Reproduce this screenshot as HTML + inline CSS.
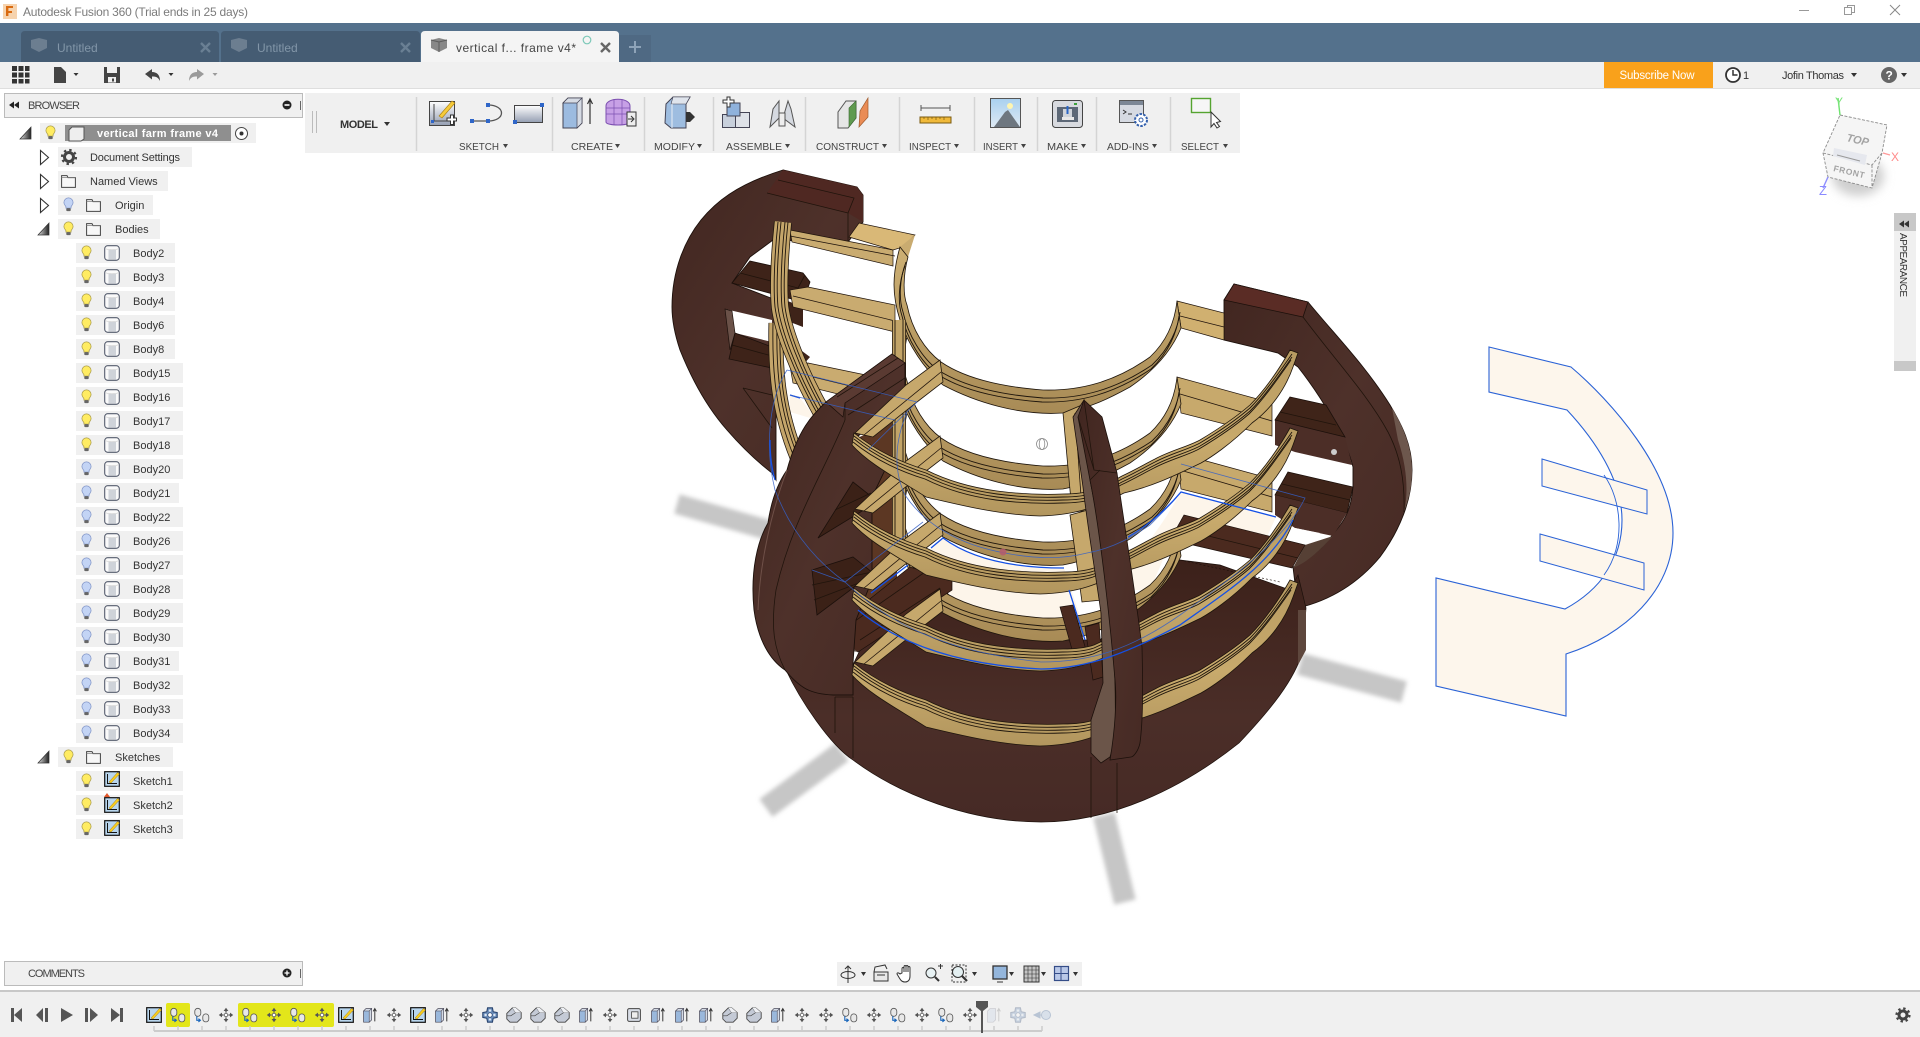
<!DOCTYPE html>
<html><head><meta charset="utf-8"><title>Autodesk Fusion 360</title>
<style>
html,body{margin:0;padding:0;background:#fff;width:1920px;height:1037px;overflow:hidden}
svg{display:block;position:absolute;left:0;top:0}
text{font-family:"Liberation Sans",sans-serif;font-size:11px;fill:#333}
.l{stroke:#20140c;stroke-width:.8;fill:none}
.t{fill:none;stroke:#1e150c;stroke-width:.9}
.bl{fill:none;stroke:#3560c8;stroke-width:.8;opacity:.85}
.bb{fill:none;stroke:#1450e6;stroke-width:1.3}
.rr{fill:#f0f0f0}
.tb{font-size:10.5px;fill:#444}
</style></head><body>
<svg width="1920" height="1037" viewBox="0 0 1920 1037" xmlns="http://www.w3.org/2000/svg">
<defs>
<filter id="blur" x="-20%" y="-20%" width="140%" height="140%"><feGaussianBlur stdDeviation="2"/></filter>
<filter id="blur2" x="-30%" y="-30%" width="160%" height="160%"><feGaussianBlur stdDeviation="5"/></filter>
<linearGradient id="rib" x1="0" y1="0" x2="1" y2="1"><stop offset="0" stop-color="#412620"/><stop offset=".5" stop-color="#4e312a"/><stop offset="1" stop-color="#462a24"/></linearGradient>
<linearGradient id="base" x1="0" y1="0" x2="0" y2="1"><stop offset="0" stop-color="#3c211a"/><stop offset=".6" stop-color="#4b2e28"/><stop offset="1" stop-color="#462a25"/></linearGradient>
<linearGradient id="tan" x1="0" y1="0" x2="0" y2="1"><stop offset="0" stop-color="#cdb074"/><stop offset="1" stop-color="#a88b56"/></linearGradient>
<linearGradient id="tanf" x1="0" y1="0" x2="0" y2="1"><stop offset="0" stop-color="#b89b62"/><stop offset=".55" stop-color="#c8aa6c"/><stop offset="1" stop-color="#b2965e"/></linearGradient>
<linearGradient id="gb" x1="0" y1="0" x2="0" y2="1"><stop offset="0" stop-color="#fff"/><stop offset="1" stop-color="#949eb2"/></linearGradient>
<linearGradient id="tri" x1="0" y1="0" x2="1" y2="0"><stop offset="0" stop-color="#ddd"/><stop offset="1" stop-color="#222"/></linearGradient>
<linearGradient id="sky" x1="0" y1="0" x2="0" y2="1"><stop offset="0" stop-color="#a9d0ef"/><stop offset="1" stop-color="#dfeaf4"/></linearGradient>

<path id="bu" d="M906 262C899 280 899 300 903 312C908 335 922 358 938 370C958 383 990 394 1043 398C1080 399 1115 390 1152 365C1170 348 1178 328 1180 312"/>
<g id="bkb">
<path d="M908 257C903 275 903 295 907 305C912 330 925 350 941 362C960 375 990 386 1043 390C1080 391 1115 382 1150 357C1168 340 1175 320 1177 301L1181 328C1172 350 1155 370 1130 387C1110 398 1090 408 1063 413C1020 416 975 402 943 385C925 370 908 345 900 320C892 295 892 275 900 247Z" fill="url(#tan)" stroke="#1e150c" stroke-width=".8"/>
<use href="#bu" class="t"/><use href="#bu" y="4" x="-1" class="t"/>
</g>
<path id="railL" d="M808 211L895 229V256L793 231L790 214Z" fill="#c9ab70" stroke="#20140c" stroke-width=".7"/>
<g id="rl"><use href="#railL"/><path d="M793 220L895 245" class="l"/></g>
<g id="rr2"><path d="M1177 301L1272 327V360L1181 337Z" fill="#c7a96c" stroke="#20140c" stroke-width=".7"/><path d="M1180 318L1272 345" class="l"/></g>

<path id="fu" d="M854 433C875 450 900 462 926 470C950 482 975 488 997 491C1020 494 1040 495 1063 494C1075 494 1085 493 1094 490C1105 485 1115 480 1122 476C1135 470 1145 464 1155 459C1172 450 1187 447 1200 440C1220 428 1235 418 1250 405C1265 390 1280 368 1292 351"/>
<g id="fb">
<path d="M854 433C875 450 900 462 926 470C950 482 975 488 997 491C1020 494 1040 495 1063 494C1075 494 1085 493 1094 490C1105 485 1115 480 1122 476C1135 470 1145 464 1155 459C1172 450 1187 447 1200 440C1220 428 1235 418 1250 405C1265 390 1280 368 1290 350L1298 353L1293 367C1285 390 1270 410 1252 423C1230 445 1210 458 1201 463C1170 478 1150 487 1124 493C1100 505 1080 515 1040 516C1000 515 960 505 926 497C900 480 870 465 852 445Z" fill="url(#tanf)" stroke="#1e150c" stroke-width=".8"/>
<use href="#fu" y="3" class="t"/><use href="#fu" y="6" class="t"/><use href="#fu" y="9" x="-1" class="t"/>
</g>
<g id="conn"><path d="M855 433L906 385L940 360L943 382L917 402L873 437Z" fill="#c6a86c" stroke="#1e150c" stroke-width=".8"/><path d="M864 435L941 372" class="l"/></g>
<path id="s1" d="M783 222C780 250 778 285 780 307C783 330 798 370 822 413"/>
<path id="s2" d="M776 323C775 370 778 410 797 457"/>

<symbol id="by" viewBox="0 0 12 16"><path d="M6 .8a5 5 0 0 0-5 5c0 2.200 1.400 3 2.200 4.600V12h5.600v-1.600C9.600 8.800 11 8 11 5.800a5 5 0 0 0-5-5z" fill="#ffec62" stroke="#a89a4a" stroke-width=".8"/><rect x="3.600" y="12" width="4.800" height="3.200" rx="1" fill="#666"/></symbol>
<symbol id="bb" viewBox="0 0 12 16"><path d="M6 .8a5 5 0 0 0-5 5c0 2.200 1.400 3 2.200 4.600V12h5.600v-1.600C9.600 8.800 11 8 11 5.800a5 5 0 0 0-5-5z" fill="#c3d4f5" stroke="#7f93c6" stroke-width=".8"/><rect x="3.600" y="12" width="4.800" height="3.200" rx="1" fill="#666"/></symbol>
<symbol id="body" viewBox="0 0 16 16"><rect x=".7" y=".7" width="14.600" height="14.600" rx="3" fill="#fafafa" stroke="#565d6e" stroke-width="1.100"/><path d="M1 3.500c3 1.500 11 1.500 14 0" fill="none" stroke="#c8c8c8" stroke-width=".6"/><rect x="4.500" y="5" width="7.500" height="9.500" fill="#cfd3d9"/></symbol>
<symbol id="fold" viewBox="0 0 15 13"><path d="M.6 12.400V.6h5.400l1 2h7.400v9.800z" fill="#f7f7f7" stroke="#444" stroke-width="1"/><path d="M.6 2.600h13.800" stroke="#777" stroke-width=".7"/></symbol>
<symbol id="sk" viewBox="0 0 16 16"><rect x=".7" y=".7" width="14.600" height="14.600" fill="#b9d6ee" stroke="#111" stroke-width="1.200"/><path d="M3.500 3v9.500H13" fill="none" stroke="#111" stroke-width="1"/><path d="M5 11 13.500 1.500l2 1.500L7 12z" fill="#f8ce20" stroke="#a67c10" stroke-width=".5"/></symbol>
<symbol id="joint" viewBox="0 0 20 20"><rect x="1" y="1" width="7.500" height="10" rx="3.700" fill="#e8e8e8" stroke="#555"/><rect x="11" y="8" width="7.500" height="10" rx="3.700" fill="#e8e8e8" stroke="#555"/><path d="M3.500 11v5h4M5.500 14l2.500 2-2.500 2" fill="none" stroke="#1966bb" stroke-width="1.400"/></symbol>
<symbol id="move" viewBox="0 0 20 20"><g fill="#555"><path d="M10 1l3 4H7zM10 19l-3-4h6zM1 10l4-3v6zM19 10l-4 3V7z"/><path d="M9.200 4h1.600v3H9.200zM9.200 13h1.600v3H9.200zM4 9.200h3v1.600H4zM13 9.200h3v1.600h-3z"/></g><circle cx="10" cy="10" r="2.200" fill="#fff" stroke="#555"/></symbol>
<symbol id="ext" viewBox="0 0 20 20"><path d="M2 5l3-3h7v14l-3 3H2z" fill="#9ab8dc" stroke="#445" stroke-width=".9"/><path d="M5 2h7l-3 3H2zM12 2v14l-3 3V5z" fill="#d3dae5" stroke="#445" stroke-width=".7"/><path d="M16 18V3M14 5.500 16 2l2 3.500" fill="none" stroke="#333" stroke-width="1.200"/></symbol>
<symbol id="extf" viewBox="0 0 20 20" opacity=".35"><path d="M2 5l3-3h7v14l-3 3H2z" fill="#c9d6e6" stroke="#889" stroke-width=".9"/><path d="M16 18V3M14 5.500 16 2l2 3.500" fill="none" stroke="#888" stroke-width="1.200"/></symbol>
<symbol id="pat" viewBox="0 0 20 20"><path d="M7 1h6l1 5 5 1v6l-5 1-1 5H7l-1-5-5-1V7l5-1z" fill="#6f92bf" stroke="#2a456f" stroke-width="1.400"/><circle cx="10" cy="10" r="2.800" fill="#fff" stroke="#2a456f"/><circle cx="10" cy="4.500" r="1.500" fill="#dfe8f2"/><circle cx="10" cy="15.500" r="1.500" fill="#dfe8f2"/><circle cx="4.500" cy="10" r="1.500" fill="#dfe8f2"/><circle cx="15.500" cy="10" r="1.500" fill="#dfe8f2"/></symbol>
<symbol id="cham" viewBox="0 0 20 20"><path d="M1 8 8 1h4l7 6v7l-5 5H5l-4-4z" fill="#c4cad6" stroke="#444" stroke-width="1.100"/><path d="M8 1l4 6 7 0M12 7 6 11H1" fill="none" stroke="#444" stroke-width=".8"/><path d="M8 1h4l7 6h-7z" fill="#eef0f4"/></symbol>
<symbol id="boxi" viewBox="0 0 20 20"><rect x="2" y="2" width="16" height="16" rx="2" fill="#d8dde6" stroke="#444" stroke-width="1.200"/><rect x="7" y="6" width="8" height="8" fill="#eee" stroke="#444"/></symbol>
</defs>

<!-- title bar -->
<rect width="1920" height="23" fill="#fff"/>
<rect x="3" y="4" width="14" height="15" fill="#f6d3ae"/>
<path d="M6 6h7v2H8.400v3H12v2H8.400v3H6z" fill="#d96a10"/>
<text x="23" y="16" style="font-size:12px;fill:#7b7b7b" textLength="225">Autodesk Fusion 360 (Trial ends in 25 days)</text>
<path d="M1799 10.500h10" stroke="#999" stroke-width="1"/>
<rect x="1847.500" y="5.500" width="7" height="7" fill="#fff" stroke="#999"/><rect x="1844.500" y="7.500" width="7" height="7" fill="#fff" stroke="#999"/>
<path d="M1890 5l10 10M1900 5l-10 10" stroke="#888" stroke-width="1"/>

<!-- tab bar -->
<rect y="23" width="1920" height="39" fill="#54718c"/>
<path d="M21 62V35q0-4 4-4h190q4 0 4 4v27z" fill="#455c73"/>
<path d="M221 62V35q0-4 4-4h191q4 0 4 4v27z" fill="#455c73"/>
<path d="M421 62V35q0-4 4-4h190q4 0 4 4v27z" fill="#f4f4f4"/>
<path d="M619 62V35h32v27z" fill="#4f6983"/>
<path d="M31 40l8-2 8 2v8l-8 4-8-4z" fill="#6c7e90"/><path d="M231 40l8-2 8 2v8l-8 4-8-4z" fill="#6c7e90"/>
<path d="M431 40l8-2 8 2v8l-8 4-8-4z" fill="#888"/><path d="M431 40l8 2 8-2M439 42v10" fill="none" stroke="#5c5c5c"/>
<text x="57" y="52" style="font-size:12px;fill:#8296a8">Untitled</text>
<text x="257" y="52" style="font-size:12px;fill:#8296a8">Untitled</text>
<text x="456" y="52" style="font-size:12px;fill:#444" textLength="120">vertical f... frame v4*</text>
<circle cx="587" cy="40" r="3.800" fill="none" stroke="#7cc8b8" stroke-width="1.200"/>
<path d="M201 43l9 9M210 43l-9 9M401 43l9 9M410 43l-9 9" stroke="#6a7f93" stroke-width="2.400"/>
<path d="M601 43l9 9M610 43l-9 9" stroke="#666" stroke-width="2.400"/>
<path d="M635 41v12M629 47h12" stroke="#8ea3b8" stroke-width="2"/>

<!-- quick toolbar -->
<rect y="62" width="1920" height="26" fill="#f0f0f0"/><rect y="88" width="1920" height="1" fill="#dedede"/>
<path d="M12 66h5v5h-5zM18.500 66h5v5h-5zM25 66h4.500v5H25zM12 72.500h5v5h-5zM18.500 72.500h5v5h-5zM25 72.500h4.500v5H25zM12 79h5v4.500h-5zM18.500 79h5v4.500h-5zM25 79h4.500v4.500H25z" fill="#333"/>
<path d="M54 67h7l5 5v11H54z" fill="#444"/><path d="M73.500 73h5l-2.500 3z" fill="#333"/>
<path d="M104 67h16v16h-16z" fill="#444"/><rect x="107" y="67" width="10" height="6" fill="#f0f0f0"/><rect x="108" y="77" width="8" height="5.500" fill="#f0f0f0"/><rect x="112" y="78.500" width="2" height="3" fill="#444"/>
<path d="M145 74l7-5v3c5 0 8 3 8 9-2-4-4-4.500-8-4.500v3z" fill="#444"/><path d="M168.500 73h5l-2.500 3z" fill="#333"/>
<path d="M204 74l-7-5v3c-5 0-8 3-8 9 2-4 4-4.500 8-4.500v3z" fill="#9a9a9a"/><path d="M212.500 73h5l-2.500 3z" fill="#9a9a9a"/>
<rect x="1604" y="62" width="109" height="26" fill="#f9a11b"/>
<text x="1619.500" y="79" style="font-size:11.500px;fill:#fff" textLength="75">Subscribe Now</text>
<circle cx="1733" cy="75" r="7" fill="#fff" stroke="#333" stroke-width="1.800"/><path d="M1733 70v5h4.500" fill="none" stroke="#333" stroke-width="1.500"/>
<text x="1743" y="79" style="font-size:11px">1</text>
<text x="1782" y="79" style="font-size:11px" textLength="62">Jofin Thomas</text><path d="M1851 73h6l-3 4z" fill="#333"/>
<circle cx="1889" cy="75" r="8" fill="#666"/><text x="1885.500" y="79.500" style="font-size:12px;font-weight:700;fill:#fff">?</text><path d="M1901 73h6l-3 4z" fill="#333"/>

<!-- model -->
<g>
<g filter="url(#blur)" stroke="#c6c6c6" fill="none">
<path d="M677 504L775 532" stroke-width="20"/>
<path d="M1300 664L1404 692" stroke-width="22"/>
<path d="M842 752L766 808" stroke-width="22"/>
<path d="M1104 815L1125 902" stroke-width="22"/>
</g>
<!-- sketch profile -->
<path d="M1489 347L1571 367C1610 400 1673 470 1673 533C1673 590 1625 635 1566 654V716L1436 686V578L1565 609C1600 590 1622 560 1622 520C1622 480 1595 440 1567 410L1489 392Z" fill="#fdf6ec" stroke="#2a62d6" stroke-width="1.100"/>
<path d="M1542 459L1647 490V514L1542 486Z" fill="#fdf6ec" stroke="#2a62d6"/>
<path d="M1540 534L1644 563V590L1540 561Z" fill="#fdf6ec" stroke="#2a62d6"/>
<path d="M1604 475C1622 500 1626 545 1604 575" fill="none" stroke="#2a62d6" stroke-width=".9"/>

<!-- back left rib -->
<path d="M783 170L857 187L863 195V222L848 242L773 240L750 257L732 283L776 300V480L772 473C755 460 740 445 727 430C705 405 690 375 680 350C675 335 672 320 672 307C672 270 685 240 701 220C715 203 735 185 783 170Z" fill="url(#rib)" stroke="#1c100b" stroke-width=".9"/>
<path d="M767 193L783 170L857 187L863 195V222L848 213Z" fill="#4f2822"/>
<path d="M767 193L848 213M778 180L854 198L848 213M848 213V242" class="l"/>
<path d="M750 261L803 273L810 282L803 302L732 283Z" fill="#3e2319" stroke="#1c100b" stroke-width=".8"/><path d="M740 273L798 288M798 288L805 275" class="l"/>
<path d="M785 300L803 307V327L790 322Z" fill="#3e2319"/>
<path d="M725 309L772 320V342L735 333L730 338Z" fill="#fff"/>
<path d="M725 309L732 311L735 333L730 350Z" fill="#6a5148" stroke="#1c100b" stroke-width=".7"/>
<path d="M735 333L772 347V368L729 359Z" fill="#3e2319" stroke="#1c100b" stroke-width=".8"/><path d="M732 345L772 356" class="l"/>
<path d="M798 348L810 357L803 365L795 360Z" fill="#3e2319"/>
<path d="M743 388L772 395M743 388L772 428" class="l"/>

<!-- back right rib -->
<path d="M1234 284L1308 302C1335 335 1365 365 1390 405C1402 425 1412 445 1412 470C1412 500 1400 530 1380 557C1365 575 1340 598 1298 608L1293 567C1310 560 1325 545 1334 533C1345 520 1351 510 1353 487V467C1345 435 1320 395 1298 367L1278 353L1224 340V300Z" fill="url(#rib)" stroke="#1c100b" stroke-width=".9"/>
<path d="M1224 300L1234 284L1308 302L1303 317Z" fill="#5a2c25" stroke="#1c100b" stroke-width=".8"/>
<path d="M1303 317C1335 360 1368 395 1388 432C1400 455 1405 480 1404 512" class="l"/>
<path d="M1392 408C1405 430 1412 450 1412 470C1412 490 1408 500 1404 512C1408 495 1408 470 1398 440Z" fill="#6d574d"/>
<path d="M1275 420L1345 437L1352 465L1295 452L1275 445Z" fill="#4c2e27"/>
<path d="M1290 397L1326 405L1345 437L1275 420Z" fill="#3f2419" stroke="#1c100b" stroke-width=".8"/><path d="M1280 412L1336 425" class="l"/>
<path d="M1288 472L1353 487L1347 513L1275 495Z" fill="#3f2419" stroke="#1c100b" stroke-width=".8"/><path d="M1282 484L1350 500" class="l"/>
<path d="M1275 495L1347 513L1333 536L1295 528L1275 515Z" fill="#4c2e27"/>
<path d="M1333 536C1320 550 1308 562 1293 568L1305 545Z" fill="#564035"/>
<circle cx="1334" cy="452" r="3" fill="#ccc"/>

<!-- cream -->
<path d="M790 395L800 398L817 420L790 412Z" fill="#fdf5ea"/><path d="M790 395L800 398" class="bb"/>
<path d="M877 437L893 420L895 437Z" fill="#fdf5ea"/>
<path d="M931 548L943 538C970 558 1010 568 1064 568L1088 640L1060 640C1000 630 960 610 948 590Z" fill="#fdf5ea"/>
<path d="M1100 590C1140 560 1165 520 1181 492L1276 517L1262 548L1210 528L1180 520L1150 590Z" fill="#fdf5ea"/>
<path d="M1295 528L1320 533L1307 543L1295 540Z" fill="#fff"/>

<!-- base -->
<path d="M786 670C800 700 830 745 853 760C900 795 970 822 1041 822C1110 822 1180 790 1239 743C1270 710 1295 680 1303 650L1306 608L1298 575L1290 590L1220 565L1180 560L1150 590L1100 640L1041 640C1000 632 960 612 945 590L860 650L853 665V695L790 672Z" fill="url(#base)" stroke="#1c100b" stroke-width=".7"/>
<path d="M835 697V733M853 697V758M835 697H853M1091 757V818M1117 763V813" class="l"/>
<path d="M1298 610H1306V650L1298 665Z" fill="#5e473d"/>
<path d="M1170 540L1184 515L1305 545L1292 568L1180 542Z" fill="#4b2a1f" stroke="#1c100b" stroke-width=".7"/><path d="M1184 530L1298 558" class="l"/>
<path d="M1180 560L1280 582" stroke="#1c100b" stroke-width=".6" stroke-dasharray="2 2"/>

<!-- brown back wall behind left -->
<path d="M853 440L897 420V600L855 650Z" fill="#5c3723"/>

<!-- back rails & bands -->
<use href="#bkb" y="228"/>
<use href="#rl" y="152"/><use href="#rr2" y="152"/><use href="#bkb" y="152"/>
<use href="#rl" y="76"/><use href="#rr2" y="76"/><use href="#bkb" y="76"/>
<path d="M790 230L893 250V266L792 242Z" fill="#c9ab70" stroke="#20140c" stroke-width=".7"/>
<path d="M849 237L859 223L915 235L903 247L893 250Z" fill="#d9b877" stroke="#20140c" stroke-width=".7"/>
<path d="M790 236L895 256" class="l"/>
<path d="M1177 301L1224 313V340L1181 328Z" fill="#d0b070" stroke="#20140c" stroke-width=".7"/><path d="M1180 316L1224 327" class="l"/>
<path d="M915 235L908 257L900 247Z" fill="#c9ab70"/>
<use href="#bkb"/>

<!-- left strips -->
<use href="#s2" fill="none" stroke="#1e150c" stroke-width="15"/><use href="#s2" fill="none" stroke="#c4a56a" stroke-width="13.500"/>
<use href="#s2" class="t" x="-3"/><use href="#s2" class="t" x="1"/><use href="#s2" class="t" x="4"/>
<use href="#s1" fill="none" stroke="#1e150c" stroke-width="18"/><use href="#s1" fill="none" stroke="#c4a56a" stroke-width="16.500"/>
<use href="#s1" class="t" x="-5"/><use href="#s1" class="t" x="-2"/><use href="#s1" class="t" x="2"/><use href="#s1" class="t" x="5"/>
<path d="M899 320V540" stroke="#1e150c" stroke-width="14"/><path d="M899 320V540" stroke="#c2a468" stroke-width="12.500"/><path d="M895 320V540M903 320V540" class="t"/>

<!-- block -->
<path d="M827 633L910 567L952 580V590L858 652Z" fill="#4b2a1f" stroke="#1c100b" stroke-width=".7"/>
<path d="M845 628L925 572M860 640L940 588" class="l"/>
<path d="M826 628L858 652L845 650Z" fill="#6a5a52"/>

<!-- front-left rib -->
<path d="M892 354L905 363V397L857 437L885 470L872 497L872 580L856 620L853 663V695H833C810 694 800 688 785 670C770 660 758 640 754 610C750 570 758 540 768 523C772 495 780 480 787 470C798 430 812 415 826 402Z" fill="url(#rib)" stroke="#1c100b" stroke-width=".9"/>
<path d="M826 402L892 354L905 363L845 403L843 417Z" fill="#5a3a32" stroke="#1c100b" stroke-width=".7"/>
<path d="M837 397L898 358M845 403V420M848 415L905 378" class="l"/>
<path d="M845 420C825 470 792 520 776 590C770 630 775 650 785 670" class="l"/>
<path d="M787 470C772 510 760 560 758 610" stroke="#6f5048" stroke-width="1" fill="none"/>
<path d="M818 538L853 482L872 497V505Z" fill="#3b2117" stroke="#1c100b" stroke-width=".8"/><path d="M835 510L871 493" class="l"/>
<path d="M812 570L853 557L873 573L817 615Z" fill="#3b2117" stroke="#1c100b" stroke-width=".8"/><path d="M812 585L872 572M814 600L872 578" class="l"/>

<!-- connectors -->
<use href="#conn" y="229"/><use href="#conn" y="153"/><use href="#conn" y="76"/><use href="#conn"/>
<g fill="#c6a86c" stroke="#1e150c" stroke-width=".8">
<path d="M1063 413L1082 405L1094 510L1072 512Z"/>
<path d="M1070 515L1088 510L1102 600L1082 602Z"/>
</g>
<path d="M1075 413L1082 510" class="l"/>
<path d="M1060 607L1073 605L1086 650L1075 660Z" fill="#4b2a1f" stroke="#1c100b" stroke-width=".7"/>
<path d="M1085 627L1099 623L1103 677L1093 680Z" fill="#4b2a1f" stroke="#1c100b" stroke-width=".7"/>

<!-- front bands -->
<use href="#fb" y="230"/><use href="#fb" y="155"/><use href="#fb" y="78"/><use href="#fb"/>

<!-- center rib -->
<path d="M1073 417L1084 400L1090 480C1100 530 1108 580 1110 613C1115 650 1116 700 1115 740L1110 757L1101 763L1091 753V720L1103 683L1101 613C1095 570 1088 530 1083 487Z" fill="#6b5549" stroke="#1c100b" stroke-width=".8"/>
<path d="M1084 400L1102 417L1117 473C1125 530 1135 590 1142 647C1143 690 1143 720 1140 743C1138 752 1133 757 1131 757L1110 760C1115 730 1117 700 1115 680C1110 620 1100 530 1090 480L1078 417Z" fill="url(#rib)" stroke="#1c100b" stroke-width=".8"/>
<path d="M1084 400L1094 470L1117 473M1090 480L1100 470M1078 417L1094 470" class="l"/>

<!-- blue sketch -->
<path class="bl" d="M787 370L917 402L868 450M790 395L895 420M923 522L845 582L812 570"/>
<path class="bl" d="M787 370C768 400 765 450 775 490C790 530 815 560 845 582C880 615 930 650 1041 662C1090 662 1130 650 1180 615C1230 580 1285 540 1305 498L1181 464"/>
<path class="bl" d="M907 413C895 440 893 470 905 495C925 525 960 545 1005 553C1030 558 1060 560 1087 553C1115 548 1135 535 1150 525C1165 510 1175 500 1181 492"/>
<path class="bb" d="M770 440C770 455 772 470 775 480"/>
<path class="bb" d="M858 610C900 645 960 665 1041 669C1090 669 1133 650 1180 625C1225 593 1270 565 1293 520"/>
<path class="bb" d="M871 593L908 565M931 548L943 538C970 558 1010 568 1064 568M1069 590L1085 640M1128 537C1150 525 1170 505 1181 492L1276 517"/>
<circle cx="1003" cy="552" r="3.500" fill="#b45a6f" opacity=".85"/>
<g fill="#fff" stroke="#8a8a8a" stroke-width=".8"><circle cx="1042" cy="444" r="5.500"/><ellipse cx="1042" cy="444" rx="2.800" ry="5.500"/></g>
</g>

<!-- view cube -->
<ellipse cx="1858" cy="176" rx="26" ry="20" fill="#cfcfcf" filter="url(#blur2)"/>
<path d="M1840 115L1887 125L1882 153L1872 188L1828 177L1823 153Z" fill="#f5f5f5" stroke="#8c8c8c" stroke-dasharray="3 1.500" stroke-width=".9"/>
<path d="M1823 153L1872 165L1882 153M1872 165V188" fill="none" stroke="#8c8c8c" stroke-dasharray="3 1.500" stroke-width=".9"/>
<path d="M1834 148L1867 155L1865 165L1833 156Z" fill="#e6e8ee"/>
<path d="M1837 155L1860 161" stroke="#999"/>
<text transform="translate(1846,141) rotate(13)" style="font-size:11px;font-weight:700;fill:#a3a3a3;font-style:italic">TOP</text>
<text transform="translate(1833,171) rotate(13)" style="font-size:8.500px;font-weight:700;fill:#a3a3a3;letter-spacing:.6px">FRONT</text>
<path d="M1840 115L1838 98" stroke="#6ee36e" stroke-width="1.400"/><text x="1835" y="106" style="font-size:12px;fill:#7de47d">Y</text>
<path d="M1883 153L1890 155" stroke="#ff9a9a" stroke-width="1.400"/><text x="1891" y="161" style="font-size:12px;fill:#ff8a8a">X</text>
<path d="M1828 177L1823 188" stroke="#8e8eff" stroke-width="1.400"/><text x="1819" y="195" style="font-size:13px;fill:#8a8aff">Z</text>

<!-- appearance -->
<rect x="1894" y="213" width="22" height="158" fill="#f0f0f0"/><rect x="1894" y="213" width="22" height="18" fill="#c8c8c8"/><rect x="1894" y="361" width="22" height="10" fill="#c8c8c8"/>
<path d="M1899 224l5-3.500v7zM1904 224l5-3.500v7z" fill="#333"/>
<text transform="translate(1900,233) rotate(90)" style="font-size:10px" textLength="64">APPEARANCE</text>

<!-- browser header -->
<rect x="4.500" y="93.500" width="298" height="24" fill="#f0f0f0" stroke="#bbb"/>
<path d="M9 105l5-3.500v7zM14 105l5-3.500v7z" fill="#222"/>
<text x="28" y="109" style="font-size:11px;fill:#444" textLength="52">BROWSER</text>
<circle cx="287" cy="105" r="4.500" fill="#222"/><rect x="284.500" y="104.200" width="5" height="1.600" fill="#fff"/>
<path d="M300.500 101v9" stroke="#666"/>

<!-- model toolbar -->
<rect x="305" y="93" width="935" height="60" fill="#f0f0f0"/>
<path d="M312.500 111v22M316.500 111v22" stroke="#bbb"/>
<text x="340" y="128" style="font-size:11px;font-weight:700;fill:#333" textLength="38">MODEL</text><path d="M384 122h6l-3 4z" fill="#333"/>
<path d="M416.500 97v54M552.500 97v54M644.500 97v54M713.500 97v54M805.500 97v54M899.500 97v54M974.500 97v54M1037.500 97v54M1096.500 97v54M1170.500 97v54" stroke="#d4d4d4" stroke-width="1.500"/>
<text x="459" y="150" class="tb" style="font-size:10.500px" textLength="40" lengthAdjust="spacingAndGlyphs">SKETCH</text>
<text x="571" y="150" class="tb" style="font-size:10.500px" textLength="42" lengthAdjust="spacingAndGlyphs">CREATE</text>
<text x="654" y="150" class="tb" style="font-size:10.500px" textLength="41" lengthAdjust="spacingAndGlyphs">MODIFY</text>
<text x="726" y="150" class="tb" style="font-size:10.500px" textLength="56" lengthAdjust="spacingAndGlyphs">ASSEMBLE</text>
<text x="816" y="150" class="tb" style="font-size:10.500px" textLength="63" lengthAdjust="spacingAndGlyphs">CONSTRUCT</text>
<text x="909" y="150" class="tb" style="font-size:10.500px" textLength="42" lengthAdjust="spacingAndGlyphs">INSPECT</text>
<text x="983" y="150" class="tb" style="font-size:10.500px" textLength="35" lengthAdjust="spacingAndGlyphs">INSERT</text>
<text x="1047" y="150" class="tb" style="font-size:10.500px" textLength="31" lengthAdjust="spacingAndGlyphs">MAKE</text>
<text x="1107" y="150" class="tb" style="font-size:10.500px" textLength="42" lengthAdjust="spacingAndGlyphs">ADD-INS</text>
<text x="1181" y="150" class="tb" style="font-size:10.500px" textLength="38" lengthAdjust="spacingAndGlyphs">SELECT</text>
<path d="M503 144h5l-2.500 4zM615 144h5l-2.500 4zM697 144h5l-2.500 4zM785 144h5l-2.500 4zM882 144h5l-2.500 4zM954 144h5l-2.500 4zM1021 144h5l-2.500 4zM1081 144h5l-2.500 4zM1152 144h5l-2.500 4zM1223 144h5l-2.500 4z" fill="#444"/>
<!-- sketch -->
<rect x="429.500" y="101.500" width="25" height="24" fill="url(#gb)" stroke="#444"/><path d="M434 104v17h17" fill="none" stroke="#444"/><path d="M439 116l13-15 3 2-13 15z" fill="#f6cb3a" stroke="#a87d12" stroke-width=".6"/><path d="M447 118h3.500v-3h3v3h3v3h-3v3.500h-3V121h-3.500z" fill="#fff" stroke="#333"/><rect x="431" y="120" width="3" height="3" fill="#2f66c8"/>
<!-- arc -->
<path d="M472 121h16M488 105c18 0 18 16 0 16" fill="none" stroke="#555" stroke-width="1.300"/><path d="M470 119h4v4h-4zM486 119h4v4h-4zM486 103h4v4h-4z" fill="#2f66c8"/>
<!-- rect -->
<rect x="514.500" y="105.500" width="28" height="17" fill="url(#gb)" stroke="#444"/><path d="M540 103h4v4h-4zM513 120h4v4h-4z" fill="#2f66c8"/>
<!-- extrude -->
<path d="M563 103l5-5h14v25l-5 5h-14z" fill="#9cbbe0" stroke="#445"/><path d="M568 98h14l-5 5h-14zM582 98v25l-5 5v-25z" fill="#d6dbe4" stroke="#445" stroke-width=".7"/><path d="M590 124V100M587.500 104l2.500-5 2.500 5" fill="none" stroke="#333" stroke-width="1.200"/>
<!-- form -->
<path d="M606 106c0-9 24-9 24 0v16c0 4-24 4-24 0z" fill="#c7a0e6" stroke="#7c4fb0"/><path d="M606 108h24M606 114h24M614 100v25M622 100v25" stroke="#7c4fb0" stroke-width=".7"/><rect x="627" y="112" width="9" height="14" fill="#eee" stroke="#333"/><path d="M628 119h5M631 116l3 3-3 3" fill="none" stroke="#333"/>
<!-- modify -->
<path d="M666 104l7-7h17l-4 7v24h-15l-6-5z" fill="#9ebde0" stroke="#445"/><path d="M673 97h17l-4 7h-15z" fill="#dfe4ec" stroke="#445" stroke-width=".6"/><path d="M672 104v24" stroke="#e8edf4"/><path d="M686 104v24" stroke="#445"/><path d="M686 112h4l5 5-5 5h-4z" fill="#333"/>
<!-- assemble -->
<rect x="722.500" y="114.500" width="13" height="13" fill="#c8d0dc" stroke="#445"/><rect x="735.500" y="112.500" width="14" height="15" fill="#dfe2e8" stroke="#445"/><rect x="727" y="103" width="13" height="13" fill="#8fb2dc" stroke="#445"/><path d="M723 100h4v-3h3v3h4v3h-4v4h-3v-4h-4z" fill="#fff" stroke="#333"/>
<path d="M770 127l3-18 6-8v17zM795 127l-4-18-3-8-5 17z" fill="#d5d9e0" stroke="#555"/><rect x="779" y="113" width="6" height="13" fill="#eee" stroke="#555"/>
<!-- construct -->
<path d="M838 112l8-11h10v17l-8 10h-10z" fill="#e6e6e6" stroke="#555"/><path d="M849 108l7-7v17l-7 9z" fill="#5f9a4f" stroke="#3b6a33" stroke-width=".6"/><path d="M859 127l1-16 8-13v19z" fill="#ea8c55" stroke="#a05a2d" stroke-width=".7"/>
<!-- inspect -->
<path d="M921 105v6M921 108h29M950 105v6" stroke="#555"/><rect x="920" y="117" width="31" height="6" fill="#f0b93a" stroke="#7a5a10"/><path d="M924 117v2M928 117v3M932 117v2M936 117v3M940 117v2M944 117v3" stroke="#7a5a10" stroke-width=".7"/>
<!-- insert -->
<rect x="990.500" y="98.500" width="30" height="29" fill="url(#sky)" stroke="#555"/><path d="M994 127l11-15 3-2 12 17z" fill="#6e7780"/><circle cx="1010" cy="106" r="3" fill="#fff5b0"/>
<!-- make -->
<rect x="1052.500" y="100.500" width="30" height="27" rx="3" fill="#d8dadf" stroke="#444"/><rect x="1057" y="107" width="21" height="15" fill="#5d6877"/><rect x="1063" y="109" width="9" height="8" fill="#d0d4da"/><path d="M1067.500 106v8" stroke="#2a66c6" stroke-width="2"/><rect x="1062" y="117" width="12" height="3" fill="#e8e8e8"/><rect x="1074" y="103" width="3" height="2" fill="#3ba23b"/>
<!-- add-ins -->
<rect x="1119.500" y="100.500" width="24" height="22" fill="#d6dae2" stroke="#555"/><rect x="1120" y="101" width="23" height="4" fill="#7c8796"/><path d="M1123 110l3 2-3 2M1128 114h4" stroke="#333" fill="none"/><circle cx="1141" cy="120" r="6" fill="#fff" stroke="#3461ae" stroke-width="2" stroke-dasharray="2.500 1.300"/><circle cx="1141" cy="120" r="2" fill="#fff" stroke="#3461ae"/>
<!-- select -->
<rect x="1191.500" y="98.500" width="19" height="14" fill="#f6f6f6" stroke="#55a430" stroke-width="1.400"/><path d="M1211 112v15l3-3.500 3 4.500 2.500-1.500-3-4 4-1z" fill="#fff" stroke="#333"/>

<!-- tree -->
<g>
<path d="M20 139l11-12v12z" fill="url(#tri)" stroke="#333" stroke-width=".7"/>
<rect x="40" y="123" width="216" height="20" class="rr"/>
<use href="#by" x="45" y="125" width="11" height="15"/>
<rect x="65" y="125" width="166" height="16" fill="#8f8f8f"/>
<path d="M69 130l3-3h12v12l-3 2H69z" fill="#eee" stroke="#555"/><path d="M72 127h12v12" fill="none" stroke="#555" stroke-width=".7"/>
<text x="97" y="137" style="font-size:11px;font-weight:700;fill:#fff" textLength="121">vertical farm frame v4</text>
<circle cx="241.500" cy="133.500" r="6" fill="#fff" stroke="#444"/><circle cx="241.500" cy="133.500" r="2" fill="#333"/>

<path d="M40.500 150.500v14l8-7z" fill="#fff" stroke="#333" stroke-width="1.100"/>
<rect x="58" y="147" width="134" height="20" class="rr"/>
<g transform="translate(69,157)"><circle r="4.500" fill="none" stroke="#444" stroke-width="3"/><circle r="7" fill="none" stroke="#444" stroke-width="2.200" stroke-dasharray="2.400 3.100"/></g>
<text x="90" y="161" textLength="90">Document Settings</text>

<path d="M40.500 174.500v14l8-7z" fill="#fff" stroke="#333" stroke-width="1.100"/>
<rect x="58" y="171" width="110" height="20" class="rr"/><use href="#fold" x="61" y="175" width="15" height="13"/><text x="90" y="185">Named Views</text>

<path d="M40.500 198.500v14l8-7z" fill="#fff" stroke="#333" stroke-width="1.100"/>
<rect x="58" y="195" width="95" height="20" class="rr"/><use href="#bb" x="63" y="197" width="11" height="15"/><use href="#fold" x="86" y="199" width="15" height="13"/><text x="115" y="209">Origin</text>

<path d="M38 235l11-12v12z" fill="url(#tri)" stroke="#333" stroke-width=".7"/>
<rect x="58" y="219" width="102" height="20" class="rr"/><use href="#by" x="63" y="221" width="11" height="15"/><use href="#fold" x="86" y="223" width="15" height="13"/><text x="115" y="233">Bodies</text>

<rect x="76" y="243" width="99" height="20" class="rr"/><use href="#by" x="81" y="245" width="11" height="15"/><use href="#body" x="104" y="245" width="16" height="16"/><text x="133" y="257">Body2</text>
<rect x="76" y="267" width="99" height="20" class="rr"/><use href="#by" x="81" y="269" width="11" height="15"/><use href="#body" x="104" y="269" width="16" height="16"/><text x="133" y="281">Body3</text>
<rect x="76" y="291" width="99" height="20" class="rr"/><use href="#by" x="81" y="293" width="11" height="15"/><use href="#body" x="104" y="293" width="16" height="16"/><text x="133" y="305">Body4</text>
<rect x="76" y="315" width="99" height="20" class="rr"/><use href="#by" x="81" y="317" width="11" height="15"/><use href="#body" x="104" y="317" width="16" height="16"/><text x="133" y="329">Body6</text>
<rect x="76" y="339" width="99" height="20" class="rr"/><use href="#by" x="81" y="341" width="11" height="15"/><use href="#body" x="104" y="341" width="16" height="16"/><text x="133" y="353">Body8</text>
<rect x="76" y="363" width="107" height="20" class="rr"/><use href="#by" x="81" y="365" width="11" height="15"/><use href="#body" x="104" y="365" width="16" height="16"/><text x="133" y="377">Body15</text>
<rect x="76" y="387" width="107" height="20" class="rr"/><use href="#by" x="81" y="389" width="11" height="15"/><use href="#body" x="104" y="389" width="16" height="16"/><text x="133" y="401">Body16</text>
<rect x="76" y="411" width="107" height="20" class="rr"/><use href="#by" x="81" y="413" width="11" height="15"/><use href="#body" x="104" y="413" width="16" height="16"/><text x="133" y="425">Body17</text>
<rect x="76" y="435" width="107" height="20" class="rr"/><use href="#by" x="81" y="437" width="11" height="15"/><use href="#body" x="104" y="437" width="16" height="16"/><text x="133" y="449">Body18</text>
<rect x="76" y="459" width="107" height="20" class="rr"/><use href="#bb" x="81" y="461" width="11" height="15"/><use href="#body" x="104" y="461" width="16" height="16"/><text x="133" y="473">Body20</text>
<rect x="76" y="483" width="103" height="20" class="rr"/><use href="#bb" x="81" y="485" width="11" height="15"/><use href="#body" x="104" y="485" width="16" height="16"/><text x="133" y="497">Body21</text>
<rect x="76" y="507" width="107" height="20" class="rr"/><use href="#bb" x="81" y="509" width="11" height="15"/><use href="#body" x="104" y="509" width="16" height="16"/><text x="133" y="521">Body22</text>
<rect x="76" y="531" width="107" height="20" class="rr"/><use href="#bb" x="81" y="533" width="11" height="15"/><use href="#body" x="104" y="533" width="16" height="16"/><text x="133" y="545">Body26</text>
<rect x="76" y="555" width="107" height="20" class="rr"/><use href="#bb" x="81" y="557" width="11" height="15"/><use href="#body" x="104" y="557" width="16" height="16"/><text x="133" y="569">Body27</text>
<rect x="76" y="579" width="107" height="20" class="rr"/><use href="#bb" x="81" y="581" width="11" height="15"/><use href="#body" x="104" y="581" width="16" height="16"/><text x="133" y="593">Body28</text>
<rect x="76" y="603" width="107" height="20" class="rr"/><use href="#bb" x="81" y="605" width="11" height="15"/><use href="#body" x="104" y="605" width="16" height="16"/><text x="133" y="617">Body29</text>
<rect x="76" y="627" width="107" height="20" class="rr"/><use href="#bb" x="81" y="629" width="11" height="15"/><use href="#body" x="104" y="629" width="16" height="16"/><text x="133" y="641">Body30</text>
<rect x="76" y="651" width="103" height="20" class="rr"/><use href="#bb" x="81" y="653" width="11" height="15"/><use href="#body" x="104" y="653" width="16" height="16"/><text x="133" y="665">Body31</text>
<rect x="76" y="675" width="107" height="20" class="rr"/><use href="#bb" x="81" y="677" width="11" height="15"/><use href="#body" x="104" y="677" width="16" height="16"/><text x="133" y="689">Body32</text>
<rect x="76" y="699" width="107" height="20" class="rr"/><use href="#bb" x="81" y="701" width="11" height="15"/><use href="#body" x="104" y="701" width="16" height="16"/><text x="133" y="713">Body33</text>
<rect x="76" y="723" width="107" height="20" class="rr"/><use href="#bb" x="81" y="725" width="11" height="15"/><use href="#body" x="104" y="725" width="16" height="16"/><text x="133" y="737">Body34</text>

<path d="M38 763l11-12v12z" fill="url(#tri)" stroke="#333" stroke-width=".7"/>
<rect x="58" y="747" width="115" height="20" class="rr"/><use href="#by" x="63" y="749" width="11" height="15"/><use href="#fold" x="86" y="751" width="15" height="13"/><text x="115" y="761">Sketches</text>
<rect x="76" y="771" width="107" height="20" class="rr"/><use href="#by" x="81" y="773" width="11" height="15"/><use href="#sk" x="104" y="771" width="16" height="16"/><text x="133" y="785">Sketch1</text>
<rect x="76" y="795" width="107" height="20" class="rr"/><use href="#by" x="81" y="797" width="11" height="15"/><use href="#sk" x="104" y="797" width="16" height="16"/><path d="M104 797h6l-3-4z" fill="#e0562a"/><text x="133" y="809">Sketch2</text>
<rect x="76" y="819" width="107" height="20" class="rr"/><use href="#by" x="81" y="821" width="11" height="15"/><use href="#sk" x="104" y="820" width="16" height="16"/><text x="133" y="833">Sketch3</text>
</g>

<!-- comments -->
<rect x="4.500" y="961.500" width="298" height="24" fill="#f0f0f0" stroke="#bbb"/>
<text x="28" y="977" style="font-size:11px;fill:#444" textLength="57">COMMENTS</text>
<circle cx="287" cy="973" r="4.500" fill="#222"/><path d="M284.500 973h5M287 970.500v5" stroke="#fff" stroke-width="1.300"/>
<path d="M300.500 969v9" stroke="#666"/>

<!-- nav bar -->
<rect x="837" y="962" width="245" height="24" fill="#f0f0f0"/>
<g fill="none" stroke="#333">
<path d="M848 966v17M845 969l3-3 3 3"/><ellipse cx="848" cy="975" rx="7" ry="3.500"/>
<rect x="874" y="972" width="14" height="9" fill="#e8e8e8"/><path d="M874 972l1-5 10-2 2 4M877 975h8"/>
<path d="M902 973v-4c0-2 2-2 2 0v3-5c0-2 2-2 2 0v5-5c0-2 2-2 2 0v5-4c0-2 2-2 2 0v8c0 4-2 6-5 6-4 0-5-3-8-8 0-2 2-1 3 0z" fill="#fff"/>
<circle cx="931" cy="973" r="5" fill="#e8f2f4"/><path d="M935 977l4 4" stroke-width="2"/><path d="M938 966h5M940.500 964v5"/>
<rect x="952" y="965" width="14" height="17" stroke-dasharray="2 1.500"/><circle cx="958" cy="972" r="5.500" fill="#e4f0f2"/><path d="M962 976l5 5" stroke-width="2.200"/>
<rect x="993" y="966" width="14" height="13" fill="#94b6dc" stroke-width="1.300"/><path d="M997 982h6"/>
<rect x="1024" y="966" width="15" height="16" fill="#c4c4c4"/><path d="M1024 970h15M1024 974h15M1024 978h15M1028 966v16M1032 966v16M1036 966v16" stroke-width=".6"/>
<rect x="1054.500" y="966.500" width="14" height="14" stroke="#354d88" stroke-width="1.200" fill="#b9c8e8"/><path d="M1054 973.500h14M1061 966v14" stroke="#354d88"/>
</g>
<path d="M861 972h5l-2.500 4zM972 972h5l-2.500 4zM1009 972h5l-2.500 4zM1041 972h5l-2.500 4zM1073 972h5l-2.500 4z" fill="#333"/>

<!-- timeline -->
<rect y="990" width="1920" height="47" fill="#f0f0f0"/><rect y="990" width="1920" height="2" fill="#c8c8c8"/>
<path d="M11 1008h3v14h-3zM22 1008v14l-8-7zM36 1015l7-7v14zM45 1008h3v14h-3zM61 1008l12 7-12 7zM85 1008h3v14h-3zM90 1008l8 7-8 7zM111 1008l9 7-9 7zM120 1008h3v14h-3z" fill="#555"/>
<g fill="#e3e61a"><rect x="166" y="1003" width="24" height="24" rx="2"/><rect x="238" y="1003" width="96" height="24" rx="2"/></g>
<path d="M154 1031H1042" stroke="#ccc" stroke-width="2"/>
<path d="M154 1026v5M178 1026v5M202 1026v5M226 1026v5M250 1026v5M274 1026v5M298 1026v5M322 1026v5M346 1026v5M370 1026v5M394 1026v5M418 1026v5M442 1026v5M466 1026v5M490 1026v5M514 1026v5M538 1026v5M562 1026v5M586 1026v5M610 1026v5M634 1026v5M658 1026v5M682 1026v5M706 1026v5M730 1026v5M754 1026v5M778 1026v5M802 1026v5M826 1026v5M850 1026v5M874 1026v5M898 1026v5M922 1026v5M946 1026v5M970 1026v5M994 1026v5M1018 1026v5M1042 1026v5" stroke="#ccc" stroke-width="1.500"/>
<use href="#sk" x="146" y="1007" width="16" height="16"/>
<use href="#joint" x="170" y="1007" width="16" height="17"/><use href="#joint" x="194" y="1007" width="16" height="17"/>
<use href="#move" x="218" y="1007" width="16" height="16"/>
<use href="#joint" x="242" y="1007" width="16" height="17"/><use href="#move" x="266" y="1007" width="16" height="16"/>
<use href="#joint" x="290" y="1007" width="16" height="17"/><use href="#move" x="314" y="1007" width="16" height="16"/>
<use href="#sk" x="338" y="1007" width="16" height="16"/><use href="#ext" x="362" y="1007" width="16" height="16"/>
<use href="#move" x="386" y="1007" width="16" height="16"/><use href="#sk" x="410" y="1007" width="16" height="16"/>
<use href="#ext" x="434" y="1007" width="16" height="16"/><use href="#move" x="458" y="1007" width="16" height="16"/>
<use href="#pat" x="482" y="1007" width="16" height="16"/><use href="#cham" x="506" y="1007" width="16" height="16"/>
<use href="#cham" x="530" y="1007" width="16" height="16"/><use href="#cham" x="554" y="1007" width="16" height="16"/>
<use href="#ext" x="578" y="1007" width="16" height="16"/><use href="#move" x="602" y="1007" width="16" height="16"/>
<use href="#boxi" x="626" y="1007" width="16" height="16"/><use href="#ext" x="650" y="1007" width="16" height="16"/>
<use href="#ext" x="674" y="1007" width="16" height="16"/><use href="#ext" x="698" y="1007" width="16" height="16"/>
<use href="#cham" x="722" y="1007" width="16" height="16"/><use href="#cham" x="746" y="1007" width="16" height="16"/>
<use href="#ext" x="770" y="1007" width="16" height="16"/><use href="#move" x="794" y="1007" width="16" height="16"/>
<use href="#move" x="818" y="1007" width="16" height="16"/><use href="#joint" x="842" y="1007" width="16" height="17"/>
<use href="#move" x="866" y="1007" width="16" height="16"/><use href="#joint" x="890" y="1007" width="16" height="17"/>
<use href="#move" x="914" y="1007" width="16" height="16"/><use href="#joint" x="938" y="1007" width="16" height="17"/>
<use href="#move" x="962" y="1007" width="16" height="16"/><use href="#extf" x="986" y="1007" width="16" height="16"/>
<g opacity=".3"><use href="#pat" x="1010" y="1007" width="16" height="16"/></g>
<path d="M1034 1015l6-3v6zM1040 1015h2" fill="#b8c4d4" stroke="#b8c4d4"/><circle cx="1046" cy="1015" r="4.500" fill="#d8e0ea" stroke="#b8c4d4"/>
<path d="M976 1001h12v6l-5 4v22h-2v-22l-5-4z" fill="#555"/>
<g transform="translate(1903,1015)"><circle r="4" fill="none" stroke="#444" stroke-width="3"/><circle r="6.500" fill="none" stroke="#444" stroke-width="2.200" stroke-dasharray="2.400 2.700"/></g>
</svg>
</body></html>
